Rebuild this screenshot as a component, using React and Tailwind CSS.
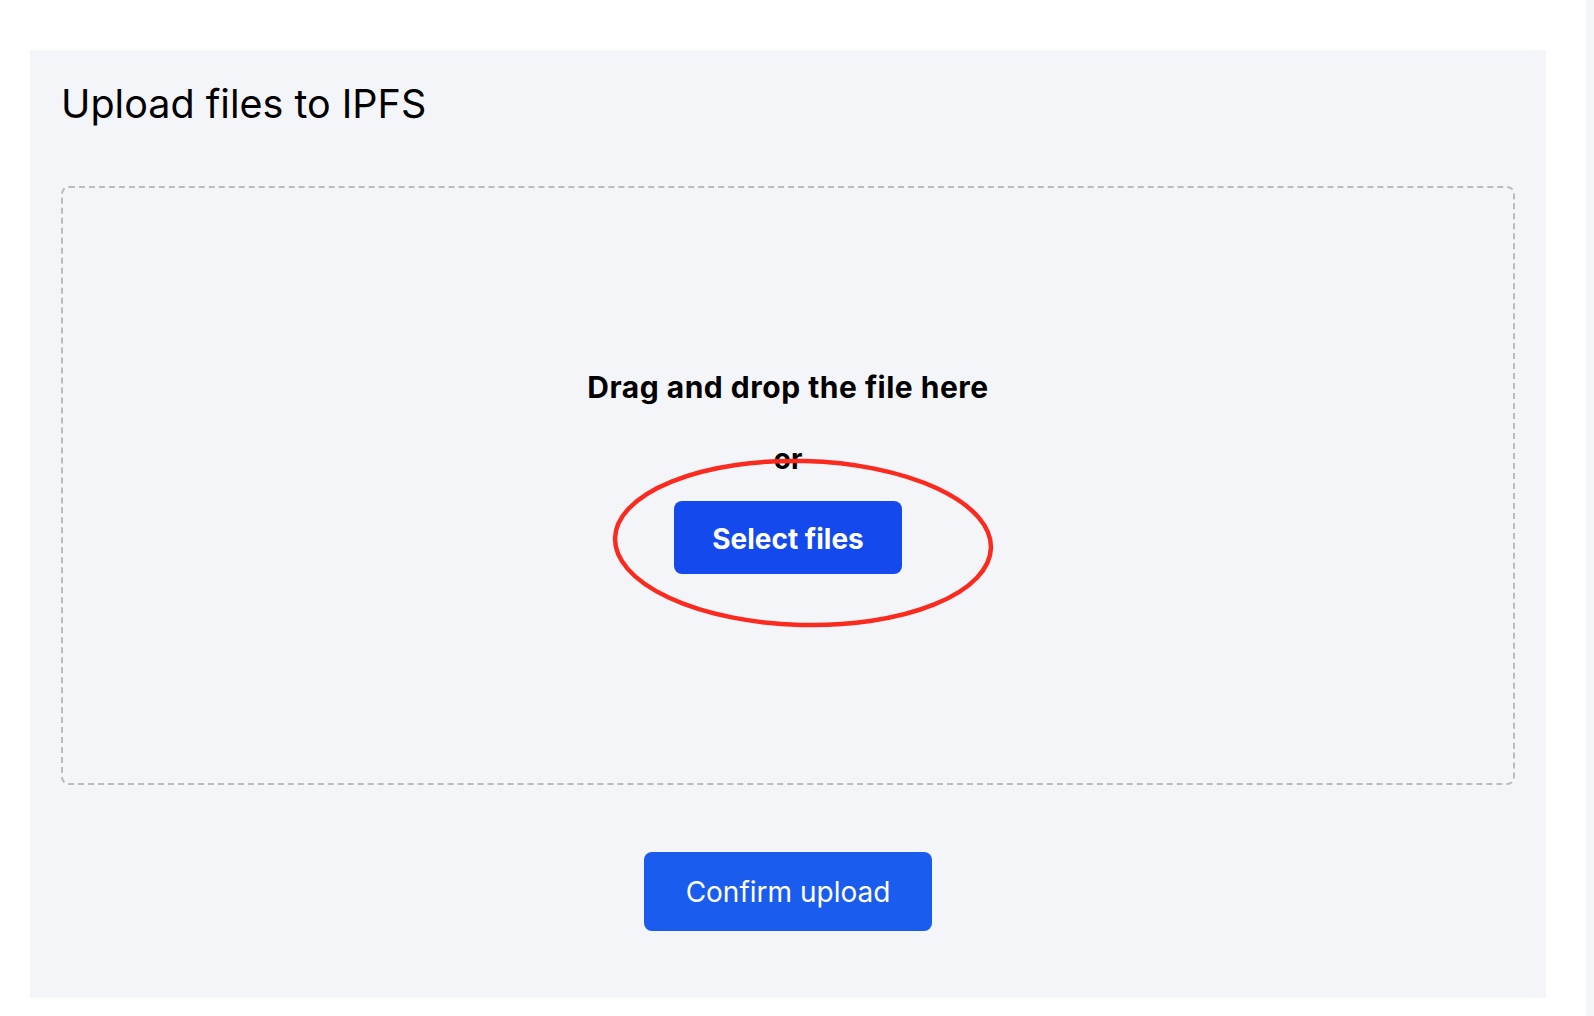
import React from "react";

export default function App() {
  return (
    <div
      className="min-h-screen flex bg-white"
      style={{ fontFamily: "Inter, 'Liberation Sans', sans-serif" }}
    >
      <main className="flex-1 pt-[50px] pb-[18px] pl-[30px] pr-[40px]">
        <section className="bg-[#f4f5f9] pt-[31px] pb-[67px] px-[31px]">
          {/* title */}
          <h1 className="text-[39.5px] leading-[1.21] font-normal text-black">
            Upload files to IPFS
          </h1>

          {/* drop zone */}
          <div className="relative mt-[57px] h-[599px] rounded-lg border-2 border-dashed border-[#bcbcc0] flex flex-col items-center pt-[178px]">
            <p className="text-[30px] leading-[42px] font-bold tracking-[0.5px] text-black">
              Drag and drop the file here
            </p>
            <p className="mt-[30px] text-[28px] leading-[42px] font-bold text-black">
              or
            </p>
            <button className="mt-[21px] w-[228px] h-[73px] rounded-lg bg-[#1449ee] text-white text-[28px] font-bold pt-[3px]">
              Select files
            </button>

            {/* hand drawn highlight */}
            <svg
              className="absolute pointer-events-none"
              style={{ left: 548, top: 269 }}
              width="384"
              height="172"
              viewBox="0 0 384 172"
            >
              <ellipse
                cx="192"
                cy="86"
                rx="188"
                ry="82"
                fill="none"
                stroke="#fa2a1e"
                strokeWidth="4.5"
                transform="rotate(1.5 192 86)"
              />
            </svg>
          </div>

          <div className="flex justify-center mt-[67px]">
            <button className="w-[288px] h-[79px] rounded-lg bg-[#1a5ced] text-white text-[28px] font-normal pt-[2px]">
              Confirm upload
            </button>
          </div>
        </section>
      </main>
      <div className="w-[8px] bg-[#f4f5f9]" />
    </div>
  );
}
